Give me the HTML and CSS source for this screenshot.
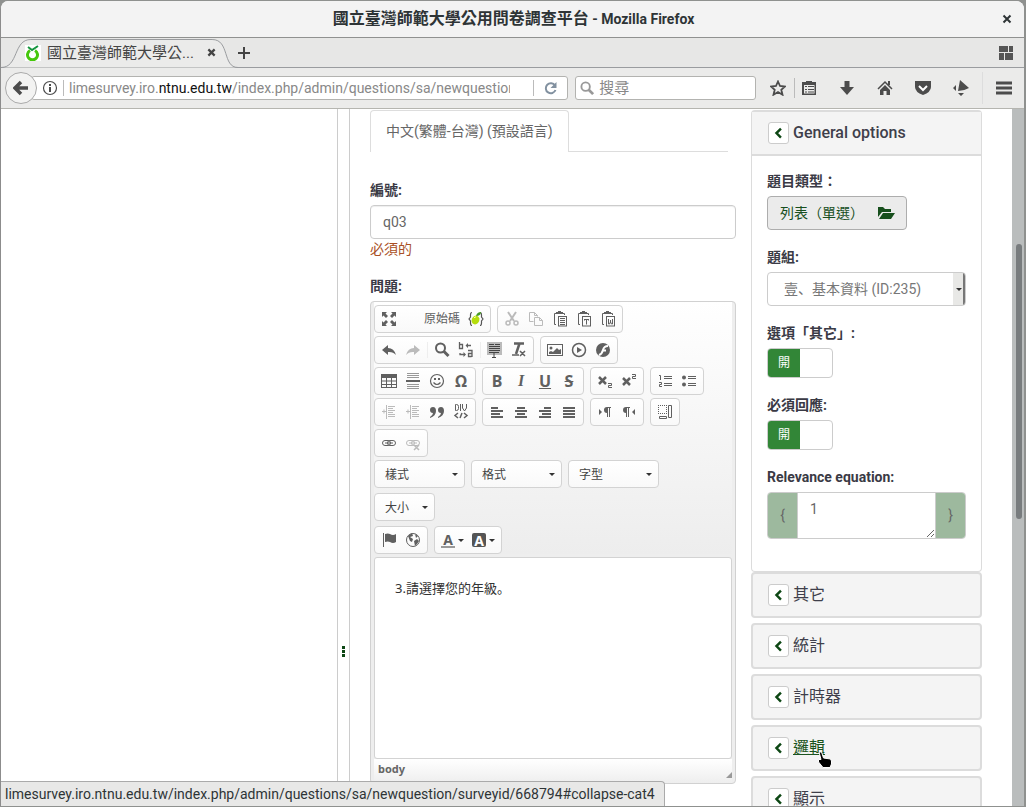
FILE: index.html
```html
<!DOCTYPE html>
<html lang="zh-Hant">
<head>
<meta charset="utf-8">
<meta name="viewport" content="width=device-width, initial-scale=1">
<title>國立臺灣師範大學公用問卷調查平台</title>
<link rel="stylesheet" href="styles.css">
</head>
<body>
<svg class="defs" aria-hidden="true">
  <symbol id="max" viewBox="0 0 16 16"><path d="M1 1h5L4.500 2.500 7 5 5 7 2.500 4.500 1 6zM15 1v5l-1.500-1.500L11 7 9 5l2.500-2.500L10 1zM1 15v-5l1.500 1.500L5 9l2 2-2.500 2.500L6 15zM15 15h-5l1.500-1.500L9 11l2-2 2.500 2.500L15 10z"/></symbol>
  <symbol id="lime" viewBox="0 0 16 16"><path d="M4 1.500Q2.500 1.500 2.500 4v2L1 8l1.500 2v2q0 2.500 1.500 2.500M12 1.500q1.500 0 1.500 2.500v2L15 8l-1.500 2v2q0 2.500-1.500 2.500" fill="none" stroke="#555" stroke-width="1.200"/><ellipse cx="7.500" cy="9" rx="3.800" ry="4.500" fill="#b5dd0b" transform="rotate(25 7.500 9)"/><path d="M6 7q1-1.500 2-1" stroke="#f5ffa0" fill="none"/><path d="M8 5q1-4 5-4 0 4-5 4z" fill="#479b24"/></symbol>
  <symbol id="cut" viewBox="0 0 16 16"><path d="M4 1l6 9M12 1L6 10" fill="none" stroke="currentColor" stroke-width="2"/><circle cx="4" cy="12" r="2" fill="none" stroke="currentColor" stroke-width="1.500"/><circle cx="12" cy="12" r="2" fill="none" stroke="currentColor" stroke-width="1.500"/></symbol>
  <symbol id="copy" viewBox="0 0 16 16"><path d="M5.500 10.500h-4v-9h5l3 3v1M6.500 1.500v3h3M6.500 6.500h5l3 3v5h-8zM11.500 6.500v3h3" fill="none" stroke="currentColor"/></symbol>
  <symbol id="paste" viewBox="0 0 16 16"><path d="M4 13.500H2.500v-11H4M10 2.500h2.500V4" fill="none" stroke="currentColor"/><path d="M4 1h2V0h3v1h2v2H4zM6 5h9v10.500H6zm1 1v8.500h7V6z" fill-rule="evenodd"/></symbol>
  <symbol id="pastelines" viewBox="0 0 16 16"><use href="#paste"/><path d="M8 7.500h5M8 9.500h5M8 11.500h5M8 13.500h5" stroke="currentColor"/></symbol>
  <symbol id="pastet" viewBox="0 0 16 16"><use href="#paste"/><path d="M8 8.500h5M10.500 8v5.500M8.500 8v1.500M12.500 8v1.500" stroke="currentColor"/></symbol>
  <symbol id="pastew" viewBox="0 0 16 16"><use href="#paste"/><path d="M8.500 8v5h1l1-2 1 2h1V8M10.500 9v3" fill="none" stroke="currentColor"/></symbol>
  <symbol id="undo" viewBox="0 0 16 16"><path d="M1 8l6-5v3q6 0 8 7-3-3.500-8-3v3z"/></symbol>
  <symbol id="redo" viewBox="0 0 16 16"><path d="M15 8L9 3v3q-6 0-8 7 3-3.500 8-3v3z"/></symbol>
  <symbol id="find" viewBox="0 0 16 16"><circle cx="6.500" cy="6" r="4.500" fill="none" stroke="currentColor" stroke-width="2"/><path d="M9.500 9l5 5" stroke="currentColor" stroke-width="3"/></symbol>
  <symbol id="replace" viewBox="0 0 16 16"><path d="M1.500 0v6.500h3v-4h-3M10 8.500h4v6.500M13.500 11.500h-3v3h3M9 3.500h4M2 11v1.500h4" fill="none" stroke="currentColor" stroke-width="1.300"/><path d="M10 1v5L7.500 3.500zM5.500 10v5L8 12.500z"/></symbol>
  <symbol id="all" viewBox="0 0 16 16"><path d="M0 0h15v13H0z" fill="#bbb"/><path d="M2 2.500h5M8 2.500h5M2 4.500h11M2 6.500h11M2 8.500h11M2 10.500h5M7 10.500h5M5 15.500h4M7 11v5" stroke="#444"/></symbol>
  <symbol id="clear" viewBox="0 0 16 16"><path d="M3 1.500h10M8.500 1.500L5 12" fill="none" stroke="currentColor" stroke-width="2.500"/><path d="M1 13h7M9 9l5 5M14 9l-5 5" stroke="currentColor" stroke-width="1.500"/></symbol>
  <symbol id="image" viewBox="0 0 16 16"><path d="M0 2h16v12H0zm1 1v10h14V3z" fill-rule="evenodd"/><circle cx="4" cy="6" r="1.500"/><path d="M2 12v-2l2-1 2 1 4-4 2 2 2-1v5z"/></symbol>
  <symbol id="play" viewBox="0 0 16 16"><circle cx="8" cy="8" r="6.500" fill="none" stroke="currentColor" stroke-width="1.500"/><path d="M6 5l5 3-5 3z"/></symbol>
  <symbol id="flash" viewBox="0 0 16 16"><circle cx="8" cy="8" r="7"/><path d="M4 13q3-1 4-5 1-4 5-4M7 8.500h4" fill="none" stroke="#fff" stroke-width="2"/></symbol>
  <symbol id="table" viewBox="0 0 16 16"><path d="M0 1h16v14H0zm1 4v2.500h4V5zm5 0v2.500h4V5zm5 0v2.500h4V5zM1 8.500V11h4V8.500zm5 0V11h4V8.500zm5 0V11h4V8.500zM1 12v2h4v-2zm5 0v2h4v-2zm5 0v2h4v-2z" fill-rule="evenodd"/></symbol>
  <symbol id="hr" viewBox="0 0 16 16"><path d="M2 .5h12M2 2.500h12M2 4.500h12M2 11.500h12M2 13.500h12M2 15.500h12" stroke="#999"/><path d="M1 7h14v2H1z"/></symbol>
  <symbol id="smile" viewBox="0 0 16 16"><circle cx="8" cy="8" r="6.500" fill="none" stroke="currentColor" stroke-width="1.200"/><path d="M5 5h2v2H5zM9 5h2v2H9z"/><path d="M4.500 9.500q3.500 4 7 0" fill="none" stroke="currentColor" stroke-width="1.200"/></symbol>
  <symbol id="sub" viewBox="0 0 16 16"><path d="M2 4l7 7M9 4l-7 7" stroke="currentColor" stroke-width="2.500"/><path d="M11 10.500h3.500v2h-3v2H15" fill="none" stroke="currentColor"/></symbol>
  <symbol id="sup" viewBox="0 0 16 16"><path d="M2 5l7 7M9 5l-7 7" stroke="currentColor" stroke-width="2.500"/><path d="M11 1.500h3.500v2h-3v2H15" fill="none" stroke="currentColor"/></symbol>
  <symbol id="ol" viewBox="0 0 16 16"><path d="M2 2.500h1.500V7M2 9.500h2.500v2h-2v2H5M7 3.500h8M7 5.500h8M7 10.500h8M7 12.500h8" fill="none" stroke="currentColor"/></symbol>
  <symbol id="ul" viewBox="0 0 16 16"><circle cx="3" cy="4.500" r="2"/><circle cx="3" cy="11.500" r="2"/><path d="M7 3.500h8M7 5.500h8M7 10.500h8M7 12.500h8" stroke="currentColor"/></symbol>
  <symbol id="indent" viewBox="0 0 16 16"><path d="M5.500 1v14M7 2.500h7M7 4.500h5M7 6.500h7M7 8.500h5M7 10.500h7M7 12.500h7M1 7.500h4M3 5.500v4" stroke="currentColor"/></symbol>
  <symbol id="quote" viewBox="0 0 16 16"><path d="M1 13q3-2 3-4-3 0-3-3t3-3q3 0 3 4 0 5-6 7zM9 13q3-2 3-4-3 0-3-3t3-3q3 0 3 4 0 5-6 7z"/></symbol>
  <symbol id="div" viewBox="0 0 16 16"><path d="M2.500.5h1q2 0 2 2v2q0 2-2 2h-1zM7.500 0v7M9.500 0v4l2 3 2-3V0" fill="none" stroke="currentColor"/><path d="M5 9l-3 2.500L5 14M11 9l3 2.500-3 2.500M9 9l-2 5" fill="none" stroke="currentColor" stroke-width="1.500"/></symbol>
  <symbol id="left" viewBox="0 0 16 16"><path d="M2 4h7M2 7h12M2 10h9M2 13h12" stroke="currentColor" stroke-width="2"/></symbol>
  <symbol id="center" viewBox="0 0 16 16"><path d="M4 4h8M2 7h12M4 10h8M2 13h12" stroke="currentColor" stroke-width="2"/></symbol>
  <symbol id="right" viewBox="0 0 16 16"><path d="M7 4h7M2 7h12M5 10h9M2 13h12" stroke="currentColor" stroke-width="2"/></symbol>
  <symbol id="justify" viewBox="0 0 16 16"><path d="M2 4h12M2 7h12M2 10h12M2 13h12" stroke="currentColor" stroke-width="2"/></symbol>
  <symbol id="ltr" viewBox="0 0 16 16"><path d="M2 5l3 3-3 3zM14 3v1h-1v9h-1V4h-1v9h-1V9Q7 9 7 6t3-3z"/></symbol>
  <symbol id="rtl" viewBox="0 0 16 16"><path d="M14 5l-3 3 3 3zM9 3v1H8v9H7V4H6v9H5V9Q2 9 2 6t3-3z"/></symbol>
  <symbol id="blocks" viewBox="0 0 16 16"><path d="M1 1.500h9M1 9.500h9M1.500 1v9M9.500 1v9" fill="none" stroke="currentColor" stroke-dasharray="1 1"/><path d="M2.500 12.500h7v2h-7zM11.500 1.500h3v12h-3z" fill="none" stroke="currentColor"/></symbol>
  <symbol id="link" viewBox="0 0 16 16"><rect x="1.500" y="5.500" width="8" height="5" rx="2.500" fill="none" stroke="currentColor"/><rect x="6.500" y="5.500" width="8" height="5" rx="2.500" fill="none" stroke="currentColor"/><path d="M4 8h8" stroke="currentColor"/></symbol>
  <symbol id="unlink" viewBox="0 0 16 16"><use href="#link"/><path d="M9 10l5 5M14 10l-5 5" stroke="currentColor" stroke-width="1.500"/></symbol>
  <symbol id="flag" viewBox="0 0 16 16"><path d="M2 1h1v14H2zM4 2q3-1 5 0 3 2 6 0v8q-3 2-6 0-2-1-5 0z"/></symbol>
  <symbol id="globe" viewBox="0 0 16 16"><circle cx="8" cy="8" r="6.500" fill="none" stroke="currentColor"/><path d="M3 4l4-3 1 3-3 1 3 2-1 3-2-1zM9 9l3-2 2 2-2 3-2 2zM10 2l3 2-2 2z"/></symbol>
  <symbol id="chev" viewBox="0 0 16 16"><path d="M11 2L5.500 7.500 11 13" fill="none" stroke="currentColor" stroke-width="3"/></symbol>
</svg>

<div class="window">
  <header class="titlebar">
    <h1>國立臺灣師範大學公用問卷調查平台<span> - Mozilla Firefox</span></h1>
    <button class="close" aria-label="Close window"><svg viewBox="0 0 10 10"><path d="M1.500 1.500l7 7M8.500 1.500l-7 7" stroke="currentColor" stroke-width="2"/></svg></button>
  </header>

  <div class="tabs">
    <div class="browser-tab">
      <svg class="tab-shape" viewBox="0 0 238 30" preserveAspectRatio="none"><path d="M0 29.500C18 29.500 12 1.500 30 1.500H212C230 1.500 222 29.500 238 29.500" fill="#ebebea" stroke="#9a9c9f"/></svg>
      <svg class="favicon" viewBox="0 0 16 16"><path d="M0 0h16v16H0z" fill="#fff"/><path d="M5 5.500a5 5 0 1 0 5 0" fill="none" stroke="#46c80c" stroke-width="3"/><path d="M3 2l4 3 6-4" fill="none" stroke="#169640" stroke-width="2"/></svg>
      <span class="tab-title">國立臺灣師範大學公...</span>
      <button class="tab-close" aria-label="Close tab"><svg viewBox="0 0 10 10"><path d="M1.500 1.500l7 7M8.500 1.500l-7 7" stroke="currentColor" stroke-width="2.500"/></svg></button>
    </div>
    <button class="new-tab" aria-label="New tab"><svg viewBox="0 0 12 12"><path d="M6 0v12M0 6h12" stroke="currentColor" stroke-width="2"/></svg></button>
    <button class="groups" aria-label="Tab groups"><svg viewBox="0 0 14 14"><path d="M0 0h9v6H0zM10 0h4v6h-4zM0 7h5v7H0zM6 7h8v7H6z"/></svg></button>
  </div>

  <nav class="navbar">
    <button class="back" aria-label="Back"><svg viewBox="0 0 16 16"><path d="M8 2L2 8l6 6M2.500 8H15" fill="none" stroke="currentColor" stroke-width="3.500"/></svg></button>
    <div class="urlbar">
      <svg class="info" viewBox="0 0 16 16"><circle cx="8" cy="8" r="6.500" fill="none" stroke="currentColor" stroke-width="1.200"/><path d="M7 4h2v2H7zM7 7h2v5H7z"/></svg>
      <div class="url" role="textbox" tabindex="0" aria-label="Address">limesurvey.iro.<b>ntnu.edu.tw</b>/index.php/admin/questions/sa/newquestion</div>
      <button class="reload" aria-label="Reload"><svg viewBox="0 0 14 14"><path d="M11 4.500A5 5 0 1 0 11.500 9" fill="none" stroke="currentColor" stroke-width="2"/><path d="M12.500 1v6h-6z"/></svg></button>
    </div>
    <label class="search"><svg viewBox="0 0 16 16"><circle cx="6" cy="6" r="4.500" fill="none" stroke="currentColor" stroke-width="2"/><path d="M9 9l5 5" stroke="currentColor" stroke-width="3"/></svg><input type="text" placeholder="搜尋" aria-label="搜尋"></label>
    <div class="tools">
      <button aria-label="Bookmark"><svg viewBox="0 0 16 16"><path d="M8 1.500l2 4.500 5 .5-3.700 3.200 1.200 5L8 12l-4.500 2.700 1.200-5L1 6.500 6 6z" fill="none" stroke="currentColor" stroke-width="1.800"/></svg></button>
      <button class="ruled" aria-label="Bookmarks list"><svg viewBox="0 0 16 16"><path d="M5 2V1h6v1h4v13H1V2zM3 5v8.500h10.500V5z" fill-rule="evenodd"/><path d="M4 6.500h2M7 6.500h6M4 9.500h2M7 9.500h6M4 12h2M7 12h6" stroke="currentColor"/></svg></button>
      <button aria-label="Downloads"><svg viewBox="0 0 16 16"><path d="M5.500 1h5v6H15l-7 8-7-8h4.500z"/></svg></button>
      <button aria-label="Home"><svg viewBox="0 0 16 16"><path d="M1 9l7-7 7 7" fill="none" stroke="currentColor" stroke-width="1.500"/><path d="M3 10l5-5 5 5v5H9.500v-4h-3v4H3zM11 1h2v4h-2z"/></svg></button>
      <button aria-label="Pocket"><svg viewBox="0 0 16 16"><path d="M0 1h16v6q0 5-8 8-8-3-8-8z"/><path d="M4 6l4 4 4-4" fill="none" stroke="#fff" stroke-width="2"/></svg></button>
      <button aria-label="Extension"><svg viewBox="0 0 16 16"><path d="M7 0l9 8q-5 3-11 3zM0 8l3-3v6zM5 13h6l-3 3z"/></svg></button>
      <button class="menu" aria-label="Menu"><svg viewBox="0 0 16 16"><path d="M0 3h16M0 8h16M0 13h16" stroke="currentColor" stroke-width="3"/></svg></button>
    </div>
  </nav>

  <main class="page">
    <aside class="sidebar"></aside>
    <div class="splitter"><i></i><i></i><i></i></div>
    <div class="scroller">
    <section class="question">
      <div class="lang-tabs"><a href="#lang">中文(繁體-台灣) (預設語言)</a></div>
      <label class="label" for="code">編號:</label>
      <input class="field" id="code" type="text" value="q03">
      <p class="required">必須的</p>
      <div class="label" id="qlabel">問題:</div>
      <div class="editor">
        <div class="toolbar">
          <div class="row">
            <div class="group"><button aria-label="Maximize"><svg><use href="#max"/></svg></button><button class="source">原始碼<svg><use href="#lime"/></svg></button></div>
            <div class="group"><button class="off" aria-label="Cut"><svg><use href="#cut"/></svg></button><button class="off" aria-label="Copy"><svg><use href="#copy"/></svg></button><button aria-label="Paste"><svg><use href="#pastelines"/></svg></button><button aria-label="Paste text"><svg><use href="#pastet"/></svg></button><button aria-label="Paste from Word"><svg><use href="#pastew"/></svg></button></div>
          </div>
          <div class="row">
            <div class="group"><button aria-label="Undo"><svg><use href="#undo"/></svg></button><button class="off" aria-label="Redo"><svg><use href="#redo"/></svg></button><span class="sep"></span><button aria-label="Find"><svg><use href="#find"/></svg></button><button aria-label="Replace"><svg><use href="#replace"/></svg></button><span class="sep"></span><button aria-label="Select all"><svg><use href="#all"/></svg></button><button aria-label="Remove format"><svg><use href="#clear"/></svg></button></div>
            <div class="group"><button aria-label="Image"><svg><use href="#image"/></svg></button><button aria-label="Video"><svg><use href="#play"/></svg></button><button aria-label="Flash"><svg><use href="#flash"/></svg></button></div>
          </div>
          <div class="row">
            <div class="group"><button aria-label="Table"><svg><use href="#table"/></svg></button><button aria-label="Rule"><svg><use href="#hr"/></svg></button><button aria-label="Smiley"><svg><use href="#smile"/></svg></button><button class="glyph">Ω</button></div>
            <div class="group"><button class="glyph">B</button><button class="glyph italic">I</button><button class="glyph under">U</button><button class="glyph strike">S</button></div>
            <div class="group"><button aria-label="Subscript"><svg><use href="#sub"/></svg></button><button aria-label="Superscript"><svg><use href="#sup"/></svg></button></div>
            <div class="group"><button aria-label="Numbered list"><svg><use href="#ol"/></svg></button><button aria-label="Bulleted list"><svg><use href="#ul"/></svg></button></div>
          </div>
          <div class="row">
            <div class="group"><button class="off" aria-label="Outdent"><svg><use href="#indent"/></svg></button><button class="off" aria-label="Indent"><svg><use href="#indent"/></svg></button><button aria-label="Quote"><svg><use href="#quote"/></svg></button><button aria-label="Div"><svg><use href="#div"/></svg></button></div>
            <div class="group"><button aria-label="Align left"><svg><use href="#left"/></svg></button><button aria-label="Align center"><svg><use href="#center"/></svg></button><button aria-label="Align right"><svg><use href="#right"/></svg></button><button aria-label="Justify"><svg><use href="#justify"/></svg></button></div>
            <div class="group"><button aria-label="Left to right"><svg><use href="#ltr"/></svg></button><button aria-label="Right to left"><svg><use href="#rtl"/></svg></button></div>
            <div class="group"><button aria-label="Show blocks"><svg><use href="#blocks"/></svg></button></div>
          </div>
          <div class="row">
            <div class="group"><button aria-label="Link"><svg><use href="#link"/></svg></button><button class="off" aria-label="Unlink"><svg><use href="#unlink"/></svg></button></div>
          </div>
          <div class="row combos">
            <span class="combo"><select aria-label="樣式"><option>樣式</option></select></span>
            <span class="combo"><select aria-label="格式"><option>格式</option></select></span>
            <span class="combo"><select aria-label="字型"><option>字型</option></select></span>
          </div>
          <div class="row combos"><span class="combo small"><select aria-label="大小"><option>大小</option></select></span></div>
          <div class="row">
            <div class="group"><button aria-label="Anchor"><svg><use href="#flag"/></svg></button><button aria-label="Iframe"><svg><use href="#globe"/></svg></button></div>
            <div class="group"><button class="color"><span class="ink">A</span><i class="caret"></i></button><button class="color"><span class="paint">A</span><i class="caret"></i></button></div>
          </div>
        </div>
        <div class="editable" contenteditable="true" role="textbox" aria-labelledby="qlabel">3.請選擇您的年級。</div>
        <div class="path"><span>body</span><i class="grip"></i></div>
      </div>
    </section>

    <aside class="options">
      <section class="panel open">
        <h2><button aria-label="Collapse"><svg><use href="#chev"/></svg></button><a href="#collapse-general">General options</a></h2>
        <div class="panel-body">
          <div class="label">題目類型：</div>
          <button class="type">列表（單選）<svg viewBox="0 0 18 16"><path d="M1 12V2h5l2 2h6v3H5zM2 14l4-6h12l-4 6z"/></svg></button>
          <label class="label" for="group">題組:</label>
          <span class="select"><select id="group"><option>壹、基本資料 (ID:235)</option></select></span>
          <div class="label">選項「其它」:</div>
          <label class="switch"><input type="checkbox" checked aria-label="選項「其它」"><span>開</span></label>
          <div class="label">必須回應:</div>
          <label class="switch"><input type="checkbox" checked aria-label="必須回應"><span>開</span></label>
          <label class="label" for="relevance">Relevance equation:</label>
          <div class="input-group"><span>{</span><textarea id="relevance" rows="1">1</textarea><span>}</span></div>
        </div>
      </section>
      <section class="panel"><h2><button aria-label="Expand"><svg><use href="#chev"/></svg></button><a href="#collapse-cat1">其它</a></h2></section>
      <section class="panel"><h2><button aria-label="Expand"><svg><use href="#chev"/></svg></button><a href="#collapse-cat2">統計</a></h2></section>
      <section class="panel"><h2><button aria-label="Expand"><svg><use href="#chev"/></svg></button><a href="#collapse-cat3">計時器</a></h2></section>
      <section class="panel"><h2><button aria-label="Expand"><svg><use href="#chev"/></svg></button><a class="hovered" href="#collapse-cat4">邏輯<svg class="cursor" viewBox="0 0 14 17"><path d="M1 1h2.500l2 6 7 1 1 2v3l-1.500 3.500H5L.5 11V8.500H3z" fill="#000" stroke="#fff"/></svg></a></h2></section>
      <section class="panel"><h2><button aria-label="Expand"><svg><use href="#chev"/></svg></button><a href="#collapse-cat5">顯示</a></h2></section>
    </aside>
    </div>
    <div class="scrollbar"><div class="above"></div><div class="thumb"></div><div class="below"></div></div>
  </main>
  <div class="status">limesurvey.iro.ntnu.edu.tw/index.php/admin/questions/sa/newquestion/surveyid/668794#collapse-cat4</div>
</div>
</body>
</html>
```

FILE: styles.css
```css
* { box-sizing: border-box; }

body {
  margin: 0;
  height: 100vh;
  overflow: hidden;
  padding: 1px 2px 1px 0;
  background: #8f918f;
  font: 14px/20px Roboto, "Noto Sans CJK TC", sans-serif;
  color: #666;
}

button {
  display: flex;
  align-items: center;
  justify-content: center;
  padding: 0;
  border: 0;
  background: none;
  color: inherit;
  font: inherit;
}

svg { fill: currentColor; flex: none; }
a { color: inherit; text-decoration: none; }
.defs { position: absolute; width: 0; height: 0; }

/* Browser window */
.window {
  position: relative;
  display: flex;
  flex-direction: column;
  height: 100%;
  overflow: hidden;
  border-left: 1px solid #8c8c8c;
  border-radius: 8px 8px 0 0;
  background: #fff;
}

.titlebar {
  flex: none;
  display: flex;
  align-items: center;
  height: 37px;
  padding: 0 12px 0 24px;
  background: #f3f3f3;
  border-bottom: 1px solid #909190;
  color: #2e3436;
}
.titlebar h1 {
  flex: 1;
  margin: 0;
  text-align: center;
  font: bold 16px/22px Roboto, "Noto Sans CJK TC", sans-serif;
}
.titlebar h1 span { font-size: 14px; }
.close svg, .tab-close svg { width: 10px; height: 10px; }

.tabs {
  flex: none;
  display: flex;
  align-items: center;
  height: 30px;
  background: #e7e7e6;
  border-bottom: 1px solid #9a9c9f;
  color: #444;
}
.browser-tab {
  position: relative;
  display: flex;
  align-items: center;
  width: 237px;
  height: 30px;
  padding: 0 22px 0 24px;
}
.tab-shape { position: absolute; inset: 0; width: 100%; height: 30px; }
.favicon { position: relative; width: 16px; height: 16px; }
.tab-title {
  position: relative;
  flex: 1;
  margin-left: 6px;
  white-space: nowrap;
  font: 15px/22px Roboto, "Noto Sans CJK TC", sans-serif;
}
.tab-close { position: relative; }
.tab-close svg { width: 9px; height: 9px; }
.new-tab svg { width: 12px; height: 12px; }
.groups { margin: 0 11px 0 auto; color: #555; }
.groups svg { width: 14px; height: 14px; }

.navbar {
  flex: none;
  display: flex;
  align-items: center;
  height: 41px;
  padding: 0 12px 0 4px;
  background: #ebebea;
  border-bottom: 1px solid #b5b5b0;
  color: #4c4c4c;
}
.back {
  position: relative;
  z-index: 1;
  width: 32px;
  height: 32px;
  border: 1px solid #aaa;
  border-radius: 50%;
  background: #f3f3f2;
}
.back svg { width: 16px; height: 16px; }
.urlbar {
  flex: 538;
  display: flex;
  align-items: center;
  min-width: 0;
  height: 24px;
  margin: 0 7px 0 -6px;
  padding-left: 10px;
  border: 1px solid #b3b3b0;
  border-radius: 3px;
  background: #fff;
}
.info { width: 16px; height: 16px; }
.url {
  flex: 1;
  overflow: hidden;
  height: 16px;
  margin-left: 5px;
  padding-left: 5px;
  border-left: 1px solid #bbb;
  white-space: nowrap;
  color: #888;
  font: 14px/16px Roboto, "Noto Sans CJK TC", sans-serif;
}
.url b { font-weight: 400; color: #111; }
.reload {
  width: 34px;
  height: 16px;
  margin-left: 23px;
  border-left: 1px solid #bbb;
  color: #8291a0;
}
.reload svg { width: 14px; height: 14px; }
.search {
  flex: 179;
  display: flex;
  align-items: center;
  min-width: 0;
  height: 24px;
  padding-left: 4px;
  border: 1px solid #b3b3b0;
  border-radius: 3px;
  background: #fff;
  color: #999;
}
.search svg { width: 15px; height: 15px; }
.search input {
  flex: 1;
  min-width: 0;
  margin-left: 4px;
  padding: 0;
  border: 0;
  outline: 0;
  background: none;
  font: 15px/20px Roboto, "Noto Sans CJK TC", sans-serif;
}
.search input::placeholder { color: #888; opacity: 1; }
.tools { display: flex; align-items: center; padding-left: 5px; }
.tools button { width: 38px; height: 20px; }
.tools button:first-child { width: 33px; }
.tools button svg { width: 16px; height: 16px; }
.tools .ruled { width: 28px; border-left: 1px solid #bbb; }
.tools button:nth-child(3) { width: 50px; }
.tools button:nth-child(4) { width: 26px; }
.tools button:nth-child(5) { width: 50px; }
.tools button:nth-child(6) { width: 26px; }
.tools .menu { width: 30px; height: 32px; margin-left: 8px; padding-left: 12px; border-left: 1px solid #ddd; }

/* Page */
.page { flex: 1; display: flex; min-height: 0; }
.sidebar { flex: 0 1 336px; }
.splitter {
  flex: 0 0 13px;
  display: flex;
  flex-direction: column;
  align-items: center;
  justify-content: end;
  gap: 1px;
  padding-bottom: 149px;
  border: solid #ccc;
  border-width: 0 1px;
}
.splitter i { width: 3px; height: 3px; background: #0d4714; }
.scroller {
  flex: 1;
  display: flex;
  align-items: flex-start;
  gap: 15px;
  min-width: 0;
  overflow: hidden;
  padding: 1px 30px 0 20px;
}
.question { flex: 1; min-width: 366px; }
.scrollbar {
  flex: 0 0 12px;
  display: flex;
  flex-direction: column;
  padding: 0 2px 0 4px;
  background: #babdbd;
}
.above { flex: 135; }
.thumb { flex: 275; border-radius: 3px; background: #787c7e; }
.below { flex: 287; }

.lang-tabs { display: flex; margin-right: 8px; }
.lang-tabs a {
  padding: 10px 15px 11px;
  border: 1px solid #ddd;
  border-bottom: 0;
  border-radius: 4px 4px 0 0;
}
.lang-tabs::after { content: ""; flex: 1; border-bottom: 1px solid #ddd; }
.label {
  display: block;
  margin-bottom: 5px;
  color: #3a3a45;
  font-weight: 700;
}
.lang-tabs + .label { margin-top: 28px; }
.field {
  display: block;
  width: 100%;
  height: 34px;
  padding: 6px 12px;
  border: 1px solid #ccc;
  border-radius: 4px;
  box-shadow: inset 0 1px 1px #eee;
  color: #666;
  font: inherit;
}
.required { margin: 0 0 17px; color: #a94f25; }

/* Rich text editor */
.editor {
  padding: 0 3px;
  border: 1px solid #d1d1d1;
  border-radius: 4px;
  background: #eee;
  font-family: "Noto Sans", "Noto Sans CJK TC", sans-serif;
}
.toolbar {
  padding-top: 3px;
  background: linear-gradient(#fff, #ededed);
}
.row { display: flex; gap: 6px; margin-bottom: 3px; }
.combos { margin-bottom: 5px; }
.group, .combo {
  display: flex;
  height: 28px;
  border: 1px solid #d3d3d3;
  border-radius: 4px;
  background: linear-gradient(#fff, #f9f9f9);
}
.group { padding: 2px; }
.group button { width: 24px; color: #606060; }
.group svg { width: 16px; height: 16px; }
.group .off { color: #bbb; }
.group .source {
  width: 87px;
  justify-content: end;
  gap: 8px;
  padding-right: 4px;
  font-size: 12px;
}
.sep { width: 1px; margin: 3px 2px; background: #eee; }
.group .glyph { font: bold 16px/22px "Noto Sans", "DejaVu Sans", sans-serif; }
.group .italic { font-family: "Liberation Serif", serif; font-style: italic; }
.group .under { text-decoration: underline; }
.group .strike { text-decoration: line-through; }
.combo { position: relative; width: 91px; }
.combo.small { width: 61px; }
.combo select {
  appearance: none;
  width: 100%;
  padding: 0 10px;
  border: 0;
  background: none;
  color: #444;
  font: 12px/20px "Noto Sans CJK TC", sans-serif;
}
.combo::after, .select::after, .caret {
  content: "";
  border: 3px solid transparent;
  border-top-color: #333;
  border-bottom: 0;
}
.combo::after { position: absolute; top: 12px; right: 6px; pointer-events: none; }
.group .color { width: 31px; gap: 3px; }
.ink, .paint { width: 14px; height: 16px; font: bold 14px/15px "Noto Sans", sans-serif; }
.ink { border-bottom: 2px solid #999; }
.paint { height: 14px; border-radius: 2px; background: #555; color: #fff; }
.editable {
  min-height: 202px;
  padding: 20px;
  border: 1px solid #d3d3d3;
  border-radius: 3px;
  background: #fff;
  color: #333;
  outline: 0;
  font: 13px/21px "Noto Sans", "Noto Sans CJK JP", sans-serif;
  font-feature-settings: "locl" 0;
}
.path {
  display: flex;
  align-items: end;
  justify-content: space-between;
  height: 24px;
  background: linear-gradient(#fff, #eee);
  font-size: 11px;
  font-weight: 700;
}
.path span { padding: 0 4px 4px; }
.grip { margin-bottom: 5px; border: 3px solid #999; border-top-color: transparent; border-left-color: transparent; }

/* Options column */
.options { flex: 0 0 231px; min-width: 0; }
.panel {
  margin-bottom: 5px;
  border: 2px solid #dcdcdc;
  border-radius: 4px;
  background: #f4f4f4;
}
.panel.open { margin-bottom: 0; border-width: 2px 1px 1px; background: #fff; }
.panel h2 {
  display: flex;
  align-items: center;
  gap: 4px;
  height: 42px;
  margin: 0;
  padding: 0 15px;
  color: #3f3f4b;
  font: 400 16px/20px Roboto, "Noto Sans CJK TC", sans-serif;
}
.panel.open h2 {
  height: 44px;
  padding: 0 16px;
  border-bottom: 2px solid #dcdcdc;
  background: #f4f4f4;
  font-weight: 500;
}
.panel h2 button {
  width: 21px;
  height: 22px;
  border: 1px solid #ccc;
  border-radius: 3px;
  background: #fff;
  color: #0d4714;
}
.panel h2 button svg { width: 13px; height: 13px; }
.panel h2 .hovered { position: relative; color: #1b5420; text-decoration: underline; }
.cursor { position: absolute; left: 25px; top: 13px; width: 14px; height: 17px; }
.panel-body { padding: 15px 15px 32px; }
.type {
  height: 34px;
  margin-bottom: 17px;
  padding: 0 11px 0 12px;
  gap: 13px;
  border: 1px solid #adadad;
  border-radius: 4px;
  background: #ebebeb;
  color: #174f1d;
}
.type svg { width: 18px; height: 16px; }
.select { position: relative; display: block; margin-bottom: 17px; }
.select select {
  appearance: none;
  display: block;
  width: 100%;
  height: 34px;
  padding: 0 16px;
  border: 1px solid #ccc;
  border-radius: 4px;
  background: linear-gradient(90deg, #e8e8e6 0 10px, #777 10px) right / 12px 100% no-repeat #fff;
  color: #777;
  font-family: Roboto, "Noto Sans CJK JP", sans-serif;
  font-size: 14px;
  font-feature-settings: "locl" 0;
}
.select::after { position: absolute; top: 16px; right: 4px; pointer-events: none; }
.switch {
  position: relative;
  display: block;
  width: 66px;
  height: 30px;
  margin-bottom: 17px;
  overflow: hidden;
  border: 1px solid #ccc;
  border-radius: 4px;
}
.switch input { position: absolute; opacity: 0; }
.switch span {
  display: block;
  width: 32px;
  background: #328637;
  color: #fff;
  text-align: center;
  font-size: 12px;
  line-height: 28px;
}
.input-group {
  display: flex;
  height: 47px;
  overflow: hidden;
  border: 1px solid #ccc;
  border-radius: 4px;
}
.input-group span {
  flex: 0 0 29px;
  background: #9db99e;
  text-align: center;
  line-height: 45px;
}
.input-group textarea {
  flex: 1;
  min-width: 0;
  padding: 6px 12px;
  border: solid #ccc;
  border-width: 0 1px;
  outline: 0;
  color: #666;
  font: inherit;
}

.status {
  position: absolute;
  left: 0;
  bottom: 0;
  padding: 2px 9px 2px 4px;
  border: solid #aaa;
  border-width: 1px 1px 0 0;
  border-radius: 0 4px 0 0;
  background: #e8e8e7;
  color: #2e3436;
  font: 14px/20px Roboto, "Noto Sans CJK TC", sans-serif;
}
```
